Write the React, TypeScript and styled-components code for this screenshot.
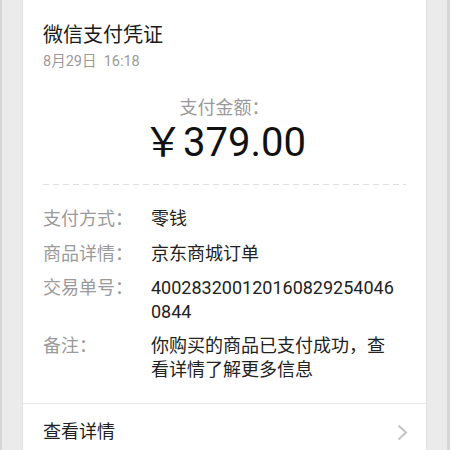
import React from "react";
import styled, { createGlobalStyle } from "styled-components";

const Global = createGlobalStyle`
  html, body { margin: 0; padding: 0; background: #ebebeb; }
  body { font-family: Roboto, "Noto Sans CJK SC", sans-serif; }
`;

const Page = styled.div`
  width: 450px;
  height: 450px;
  box-sizing: border-box;
  overflow: hidden;
  background: #ebebeb;
  border-left: 2px solid #d6d6d6;
  border-right: 3px solid #d6d6d6;
  padding-left: 20px;
  display: flex;
  align-items: flex-start;
`;

const Card = styled.div`
  width: 405px;
  flex: none;
  box-sizing: border-box;
  background: #fff;
  border-left: 1px solid #e0e0e0;
  border-right: 1px solid #e0e0e0;
  min-height: 480px;
  display: flex;
  flex-direction: column;
`;

const Head = styled.div`
  padding: 21px 20px 0 20px;
  display: flex;
  flex-direction: column;
  gap: 3px;
`;

const Title = styled.div`
  font-size: 20px;
  line-height: 28px;
  color: #1a1a1a;
`;

const DateText = styled.div`
  font-size: 14.5px;
  line-height: 20px;
  color: #9a9a9a;
  white-space: pre;
`;

const AmountBox = styled.div`
  margin: 24px 20px 0 20px;
  padding-bottom: 18px;
  display: flex;
  flex-direction: column;
  align-items: center;
  background-image: repeating-linear-gradient(
    to right,
    #dedede 0,
    #dedede 6px,
    transparent 6px,
    transparent 10px
  );
  background-size: 100% 1px;
  background-repeat: no-repeat;
  background-position: left bottom;
`;

const AmountLabel = styled.div`
  font-size: 18px;
  line-height: 24px;
  color: #9a9a9a;
`;

const Amount = styled.div`
  font-size: 40px;
  line-height: 46px;
  color: #111;
  margin-bottom: 1px;
`;

const Rows = styled.div`
  padding: 22px 25px 22px 20px;
  display: grid;
  grid-template-columns: 108px 1fr;
  row-gap: 11px;
`;

const Label = styled.div`
  font-size: 18px;
  line-height: 23.5px;
  color: #9a9a9a;
`;

const Value = styled.div`
  font-size: 18px;
  line-height: 23.5px;
  color: #222;
  word-break: break-all;
`;

const Footer = styled.div`
  border-top: 1px solid #e5e5e5;
  height: 56px;
  padding: 0 18px 0 20px;
  display: flex;
  align-items: center;
  justify-content: space-between;
`;

const FooterText = styled.div`
  font-size: 18px;
  line-height: 24px;
  color: #222;
`;

const Chevron = () => (
  <svg width="11" height="17" viewBox="0 0 11 17">
    <polyline
      points="1.5,1.5 9,8.5 1.5,15.5"
      fill="none"
      stroke="#c4c4c4"
      strokeWidth="2"
    />
  </svg>
);

const rows: [string, string][] = [
  ["支付方式：", "零钱"],
  ["商品详情：", "京东商城订单"],
  ["交易单号：", "4002832001201608292540460844"],
  ["备注：", "你购买的商品已支付成功，查看详情了解更多信息"],
];

export default function App() {
  return (
    <>
      <Global />
      <Page>
        <Card>
          <Head>
            <Title>微信支付凭证</Title>
            <DateText>8月29日  16:18</DateText>
          </Head>
          <AmountBox>
            <AmountLabel>支付金额：</AmountLabel>
            <Amount>￥379.00</Amount>
          </AmountBox>
          <Rows>
            {rows.map(([l, v]) => (
              <React.Fragment key={l}>
                <Label>{l}</Label>
                <Value>{v}</Value>
              </React.Fragment>
            ))}
          </Rows>
          <Footer>
            <FooterText>查看详情</FooterText>
            <Chevron />
          </Footer>
        </Card>
      </Page>
    </>
  );
}
